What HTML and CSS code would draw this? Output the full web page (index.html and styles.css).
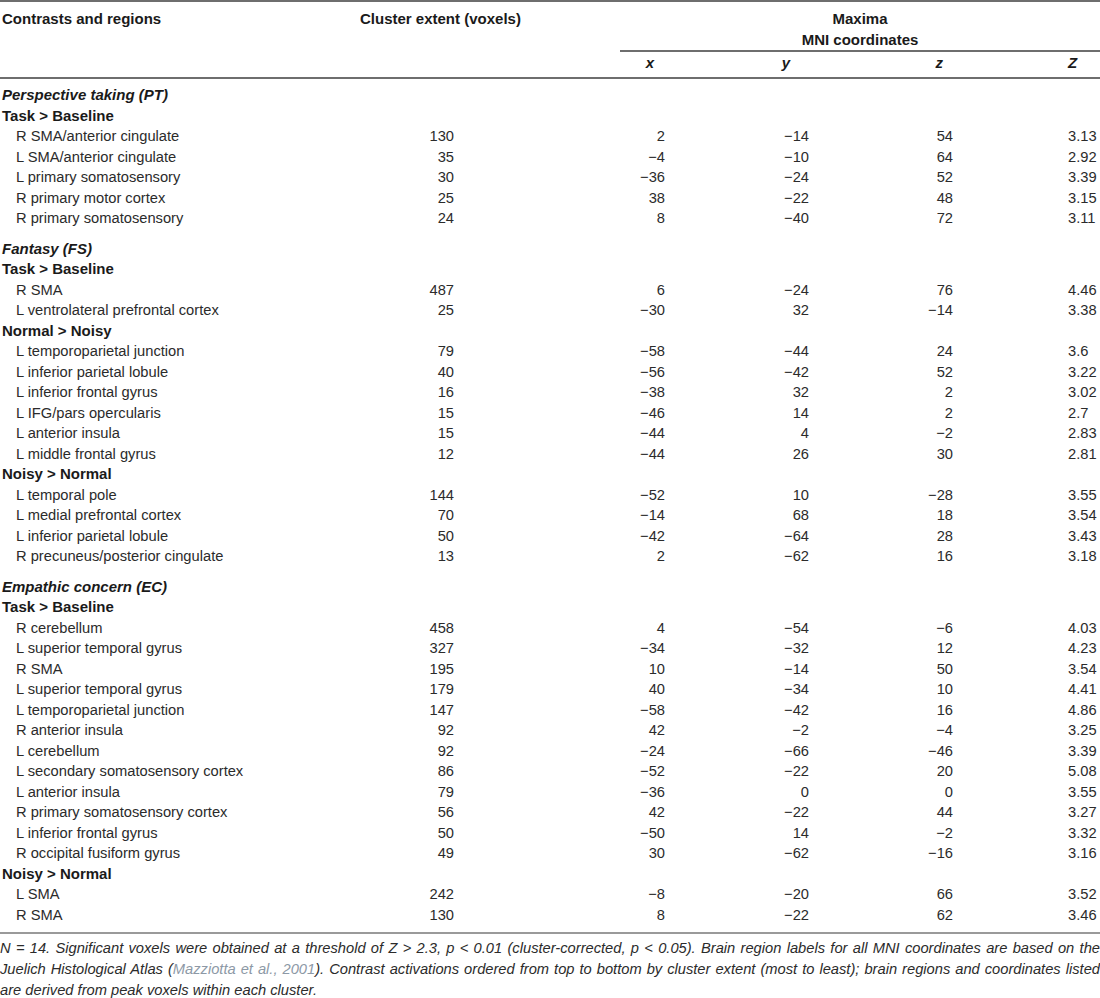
FILE: index.html
```html
<!DOCTYPE html>
<html>
<head>
<meta charset="utf-8">
<link rel="stylesheet" href="styles.css">
</head>
<body>
<div class="page">
<table class="tbl">
  <colgroup>
    <col class="c1"><col class="c2"><col class="c3"><col class="c4"><col class="c5"><col class="c6">
  </colgroup>
  <thead>
    <tr class="h1">
      <th class="hc1" rowspan="2">Contrasts and regions</th>
      <th class="hc2" rowspan="2">Cluster extent (voxels)</th>
      <th class="hmax" colspan="4">Maxima<br>MNI coordinates</th>
    </tr>
    <tr class="h2">
      <th class="hx"><i>x</i></th>
      <th class="hy"><i>y</i></th>
      <th class="hz"><i>z</i></th>
      <th class="hZ"><i>Z</i></th>
    </tr>
  </thead>
  <tbody>
    <tr class="sec first"><td colspan="6"><b><i>Perspective taking (PT)</i></b></td></tr>
    <tr class="sub"><td colspan="6">Task &gt; Baseline</td></tr>
    <tr><td class="r">R SMA/anterior cingulate</td><td class="n">130</td><td class="x">2</td><td class="y">−14</td><td class="z">54</td><td class="zz">3.13</td></tr>
    <tr><td class="r">L SMA/anterior cingulate</td><td class="n">35</td><td class="x">−4</td><td class="y">−10</td><td class="z">64</td><td class="zz">2.92</td></tr>
    <tr><td class="r">L primary somatosensory</td><td class="n">30</td><td class="x">−36</td><td class="y">−24</td><td class="z">52</td><td class="zz">3.39</td></tr>
    <tr><td class="r">R primary motor cortex</td><td class="n">25</td><td class="x">38</td><td class="y">−22</td><td class="z">48</td><td class="zz">3.15</td></tr>
    <tr><td class="r">R primary somatosensory</td><td class="n">24</td><td class="x">8</td><td class="y">−40</td><td class="z">72</td><td class="zz">3.11</td></tr>

    <tr class="sec"><td colspan="6"><b><i>Fantasy (FS)</i></b></td></tr>
    <tr class="sub"><td colspan="6">Task &gt; Baseline</td></tr>
    <tr><td class="r">R SMA</td><td class="n">487</td><td class="x">6</td><td class="y">−24</td><td class="z">76</td><td class="zz">4.46</td></tr>
    <tr><td class="r">L ventrolateral prefrontal cortex</td><td class="n">25</td><td class="x">−30</td><td class="y">32</td><td class="z">−14</td><td class="zz">3.38</td></tr>
    <tr class="sub"><td colspan="6">Normal &gt; Noisy</td></tr>
    <tr><td class="r">L temporoparietal junction</td><td class="n">79</td><td class="x">−58</td><td class="y">−44</td><td class="z">24</td><td class="zz">3.6</td></tr>
    <tr><td class="r">L inferior parietal lobule</td><td class="n">40</td><td class="x">−56</td><td class="y">−42</td><td class="z">52</td><td class="zz">3.22</td></tr>
    <tr><td class="r">L inferior frontal gyrus</td><td class="n">16</td><td class="x">−38</td><td class="y">32</td><td class="z">2</td><td class="zz">3.02</td></tr>
    <tr><td class="r">L IFG/pars opercularis</td><td class="n">15</td><td class="x">−46</td><td class="y">14</td><td class="z">2</td><td class="zz">2.7</td></tr>
    <tr><td class="r">L anterior insula</td><td class="n">15</td><td class="x">−44</td><td class="y">4</td><td class="z">−2</td><td class="zz">2.83</td></tr>
    <tr><td class="r">L middle frontal gyrus</td><td class="n">12</td><td class="x">−44</td><td class="y">26</td><td class="z">30</td><td class="zz">2.81</td></tr>
    <tr class="sub"><td colspan="6">Noisy &gt; Normal</td></tr>
    <tr><td class="r">L temporal pole</td><td class="n">144</td><td class="x">−52</td><td class="y">10</td><td class="z">−28</td><td class="zz">3.55</td></tr>
    <tr><td class="r">L medial prefrontal cortex</td><td class="n">70</td><td class="x">−14</td><td class="y">68</td><td class="z">18</td><td class="zz">3.54</td></tr>
    <tr><td class="r">L inferior parietal lobule</td><td class="n">50</td><td class="x">−42</td><td class="y">−64</td><td class="z">28</td><td class="zz">3.43</td></tr>
    <tr><td class="r">R precuneus/posterior cingulate</td><td class="n">13</td><td class="x">2</td><td class="y">−62</td><td class="z">16</td><td class="zz">3.18</td></tr>

    <tr class="sec"><td colspan="6"><b><i>Empathic concern (EC)</i></b></td></tr>
    <tr class="sub"><td colspan="6">Task &gt; Baseline</td></tr>
    <tr><td class="r">R cerebellum</td><td class="n">458</td><td class="x">4</td><td class="y">−54</td><td class="z">−6</td><td class="zz">4.03</td></tr>
    <tr><td class="r">L superior temporal gyrus</td><td class="n">327</td><td class="x">−34</td><td class="y">−32</td><td class="z">12</td><td class="zz">4.23</td></tr>
    <tr><td class="r">R SMA</td><td class="n">195</td><td class="x">10</td><td class="y">−14</td><td class="z">50</td><td class="zz">3.54</td></tr>
    <tr><td class="r">L superior temporal gyrus</td><td class="n">179</td><td class="x">40</td><td class="y">−34</td><td class="z">10</td><td class="zz">4.41</td></tr>
    <tr><td class="r">L temporoparietal junction</td><td class="n">147</td><td class="x">−58</td><td class="y">−42</td><td class="z">16</td><td class="zz">4.86</td></tr>
    <tr><td class="r">R anterior insula</td><td class="n">92</td><td class="x">42</td><td class="y">−2</td><td class="z">−4</td><td class="zz">3.25</td></tr>
    <tr><td class="r">L cerebellum</td><td class="n">92</td><td class="x">−24</td><td class="y">−66</td><td class="z">−46</td><td class="zz">3.39</td></tr>
    <tr><td class="r">L secondary somatosensory cortex</td><td class="n">86</td><td class="x">−52</td><td class="y">−22</td><td class="z">20</td><td class="zz">5.08</td></tr>
    <tr><td class="r">L anterior insula</td><td class="n">79</td><td class="x">−36</td><td class="y">0</td><td class="z">0</td><td class="zz">3.55</td></tr>
    <tr><td class="r">R primary somatosensory cortex</td><td class="n">56</td><td class="x">42</td><td class="y">−22</td><td class="z">44</td><td class="zz">3.27</td></tr>
    <tr><td class="r">L inferior frontal gyrus</td><td class="n">50</td><td class="x">−50</td><td class="y">14</td><td class="z">−2</td><td class="zz">3.32</td></tr>
    <tr><td class="r">R occipital fusiform gyrus</td><td class="n">49</td><td class="x">30</td><td class="y">−62</td><td class="z">−16</td><td class="zz">3.16</td></tr>
    <tr class="sub"><td colspan="6">Noisy &gt; Normal</td></tr>
    <tr><td class="r">L SMA</td><td class="n">242</td><td class="x">−8</td><td class="y">−20</td><td class="z">66</td><td class="zz">3.52</td></tr>
    <tr class="last"><td class="r">R SMA</td><td class="n">130</td><td class="x">8</td><td class="y">−22</td><td class="z">62</td><td class="zz">3.46</td></tr>
  </tbody>
</table>
<div class="note">
  <span class="line just"><i>N</i> = 14. Significant voxels were obtained at a threshold of <i>Z</i> &gt; 2.3, <i>p</i> &lt; 0.01 (cluster-corrected, <i>p</i> &lt; 0.05). Brain region labels for all MNI coordinates are based on the</span>
  <span class="line just">Juelich Histological Atlas (<span class="ref">Mazziotta et al., 2001</span>). Contrast activations ordered from top to bottom by cluster extent (most to least); brain regions and coordinates listed</span>
  <span class="line">are derived from peak voxels within each cluster.</span>
</div>
</div>
</body>
</html>
```

FILE: styles.css
```css
html, body {
  margin: 0;
  padding: 0;
  background: #ffffff;
}

.page {
  width: 1100px;
  font-family: "Liberation Sans", Arial, Helvetica, sans-serif;
  font-size: 14.7px;
  color: #2b2b2b;
}

.tbl {
  width: 1100px;
  border-collapse: collapse;
  table-layout: fixed;
  border-top: 2px solid #6e6e6e;
  border-bottom: 2px solid #9a9a9a;
}

.c1 { width: 340px; }
.c2 { width: 280px; }
.c3 { width: 80px; }
.c4 { width: 150px; }
.c5 { width: 150px; }
.c6 { width: 100px; }

.tbl th {
  font-size: 15px;
  font-weight: bold;
  color: #1a1a1a;
  padding: 0;
  line-height: 21px;
  vertical-align: top;
}

.tbl thead {
  border-bottom: 2px solid #6e6e6e;
}

.h1 th {
  padding-top: 6px;
}

.hc1 {
  text-align: left;
  padding-left: 2px !important;
}

.hc2 {
  text-align: left;
  padding-left: 20px !important;
}

.hmax {
  text-align: center;
  height: 42px;
}

.h2 th {
  border-top: 2px solid #6e6e6e;
  padding-top: 1px;
  padding-bottom: 4px;
  line-height: 20px;
}

.hx { text-align: right; padding-right: 46px !important; }
.hy { text-align: right; padding-right: 60px !important; }
.hz { text-align: right; padding-right: 57px !important; }
.hZ { text-align: left; padding-left: 68px !important; }

.tbl td {
  padding: 0;
  line-height: 20.5px;
  white-space: nowrap;
}

.sec td {
  padding-top: 10px;
  font-size: 15px;
  font-weight: bold;
  color: #1a1a1a;
  padding-left: 2px;
}

.sec.first td {
  padding-top: 6px;
}

.sub td {
  font-size: 15px;
  font-weight: bold;
  color: #1a1a1a;
  padding-left: 2px;
}

.tbl td.r {
  padding-left: 16px;
}

.tbl td.n {
  text-align: right;
  padding-right: 166px;
}

.tbl td.x {
  text-align: right;
  padding-right: 35px;
}

.tbl td.y {
  text-align: right;
  padding-right: 41px;
}

.tbl td.z {
  text-align: right;
  padding-right: 47px;
}

.tbl td.zz {
  text-align: left;
  padding-left: 68px;
}

.last td {
  padding-bottom: 7px;
}

.note {
  margin: 4px 0 0 0;
  font-style: italic;
  line-height: 21px;
  color: #2b2b2b;
}

.line {
  display: block;
  white-space: nowrap;
}

.line.just {
  white-space: normal;
  text-align: justify;
  text-align-last: justify;
}

.ref {
  color: #8d99a6;
}
```
